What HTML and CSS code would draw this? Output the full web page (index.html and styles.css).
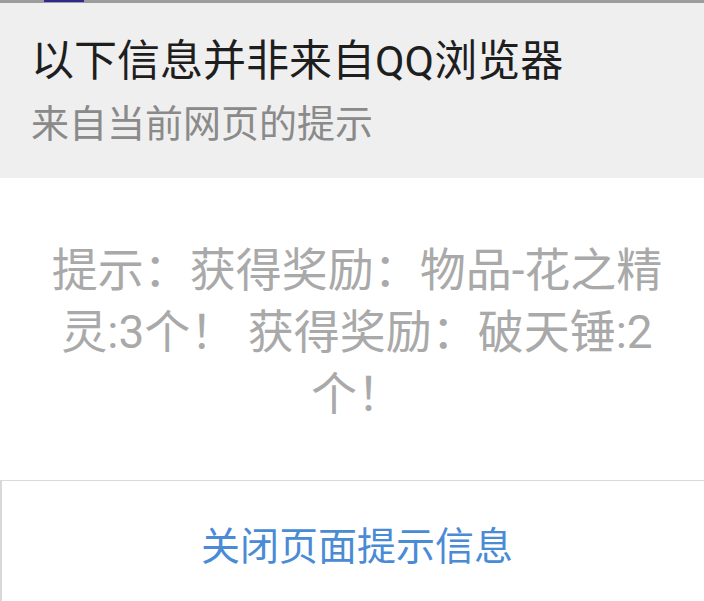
FILE: index.html
```html
<!DOCTYPE html>
<html lang="zh-CN">
<head>
<meta charset="utf-8">
<title>来自当前网页的提示</title>
<link rel="stylesheet" href="styles.css">
</head>
<body>
<div class="topbar"><span class="fragment"></span></div>
<div class="dialog">
  <div class="header">
    <div class="title">以下信息并非来自QQ浏览器</div>
    <div class="subtitle">来自当前网页的提示</div>
  </div>
  <div class="content">
    <p class="message">提示：获得奖励：物品-花之精灵:3个！ 获得奖励：破天锤:2个！</p>
  </div>
  <div class="actions">
    <div class="close-btn">关闭页面提示信息</div>
  </div>
</div>
</body>
</html>
```
FILE: styles.css
```css
html, body {
  margin: 0;
  padding: 0;
  background: #ffffff;
}
body {
  width: 704px;
  height: 601px;
  overflow: hidden;
  font-family: "Noto Sans CJK SC", "Noto Sans", sans-serif;
}
.topbar {
  height: 3px;
  background: #9d9d9d;
  display: flex;
  padding-left: 44px;
}
.fragment {
  display: block;
  width: 40px;
  height: 2px;
  background: #2e2a8a;
}
.dialog {
  display: flex;
  flex-direction: column;
}
.header {
  background: #efefef;
  padding: 28px 20px 0 31px;
  height: 175px;
  box-sizing: border-box;
}
.title {
  font-family: Roboto, "Noto Sans CJK SC", sans-serif;
  font-size: 43px;
  line-height: 60px;
  color: #1e1e1e;
  white-space: nowrap;
}
.subtitle {
  margin-top: 5px;
  font-size: 38px;
  line-height: 50px;
  color: #8a8a8a;
  white-space: nowrap;
}
.content {
  height: 302px;
  box-sizing: border-box;
  padding: 61px 37px 0 47px;
  background: #ffffff;
}
.message {
  margin: 0;
  font-family: Roboto, "Noto Sans CJK SC", sans-serif;
  font-size: 46px;
  line-height: 62px;
  color: #a9a9a9;
  text-align: center;
}
.actions {
  border-top: 1px solid #dadada;
  border-left: 2px solid #d8d8d8;
  height: 120px;
  display: flex;
  align-items: center;
  justify-content: center;
  padding-left: 8px;
}
.close-btn {
  font-size: 39px;
  line-height: 60px;
  color: #4a8bd6;
  margin-top: 4px;
}
```
